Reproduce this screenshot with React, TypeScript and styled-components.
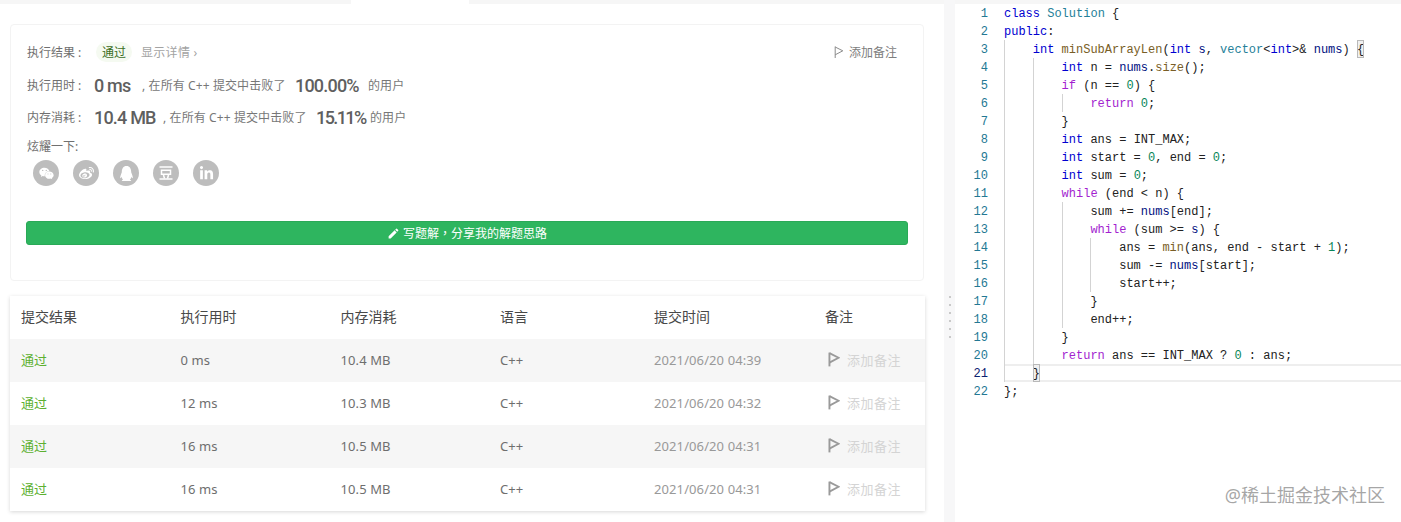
import React from "react";
import styled, { createGlobalStyle } from "styled-components";
import { FaLinkedinIn, FaQq, FaWeibo, FaWeixin } from "react-icons/fa";
import { MdEdit } from "react-icons/md";

const GlobalStyle = createGlobalStyle`
  html, body {
    margin: 0;
    padding: 0;
    background: #fff;
    font-family: "Roboto", "Noto Sans CJK SC", sans-serif;
  }
`;

const CJK = `"Noto Sans", "Noto Sans CJK SC", sans-serif`;

const Page = styled.div`
  width: 1401px;
  height: 522px;
  overflow: hidden;
  display: grid;
  grid-template-columns: 944px 11px 1fr;
  position: relative;
  background: #fff;
`;

const LeftPane = styled.div`
  display: flex;
  flex-direction: column;
`;

const TabStrip = styled.div`
  height: 4px;
  display: grid;
  grid-template-columns: 351px 118px 1fr;
`;

const TabSegment = styled.div<{ $active?: boolean }>`
  background: ${(p) => (p.$active ? "#fff" : "#f6f6f6")};
`;

const Content = styled.div`
  padding: 20px 20px 0 10px;
  display: flex;
  flex-direction: column;
  gap: 15px;
`;

const ResultCard = styled.section`
  box-sizing: border-box;
  width: 914px;
  height: 257px;
  padding: 0 15px;
  border: 1px solid #f3f3f3;
  border-radius: 4px;
  color: #666;
  font-family: ${CJK};
  font-size: 12px;
`;

const TopRow = styled.div`
  height: 20px;
  margin-top: 17px;
  display: flex;
  align-items: center;
  justify-content: space-between;
`;

const RowStart = styled.div`
  display: flex;
  align-items: center;
`;

const Label = styled.span`
  width: 67px;
  margin-left: 1px;
  flex: none;
  color: #707070;
  white-space: nowrap;
`;

const PassBadge = styled.span`
  margin-left: 2px;
  width: 36px;
  height: 20px;
  border-radius: 10px;
  background: #f5faf1;
  color: #3b6d1e;
  display: flex;
  align-items: center;
  justify-content: center;
`;

const DetailLink = styled.span`
  margin-left: 9px;
  color: #a3a3a3;
  letter-spacing: 0.3px;
`;

const NoteAction = styled.span`
  display: flex;
  align-items: center;
  gap: 5px;
  margin-right: 11px;
  color: #7d7d7d;
`;

const StatRow = styled.div<{ $top: number }>`
  height: 24px;
  margin-top: ${(p) => p.$top}px;
  display: flex;
  align-items: center;
`;

const StatValue = styled.span<{ $w: number; $tight?: boolean }>`
  width: ${(p) => p.$w}px;
  flex: none;
  font-family: "Roboto", sans-serif;
  font-size: 18px;
  font-weight: 500;
  letter-spacing: ${(p) => (p.$tight ? "-1.6px" : "-0.8px")};
  color: #5f5f5f;
  white-space: nowrap;
`;

const StatText = styled.span<{ $w: number }>`
  width: ${(p) => p.$w}px;
  flex: none;
  white-space: nowrap;
  letter-spacing: 0.1px;
  color: #777;
`;

const BragLabel = styled.div`
  margin: 10px 0 0 1px;
  height: 16px;
  line-height: 16px;
  color: #707070;
`;

const ShareRow = styled.div`
  margin: 5px 0 0 7px;
  display: flex;
  gap: 14px;
`;

const ShareButton = styled.span`
  width: 26px;
  height: 26px;
  border-radius: 50%;
  background: #bdbdbd;
  color: #fff;
  font-size: 15px;
  display: flex;
  align-items: center;
  justify-content: center;
`;

const WriteButton = styled.div`
  box-sizing: border-box;
  margin-top: 35px;
  width: 882px;
  height: 24px;
  border-radius: 3px;
  background: #2eb55f;
  border: 1px solid #2aa957;
  color: #fff;
  display: flex;
  align-items: center;
  justify-content: center;
  gap: 3px;
`;

const CenteredComma = styled.span`
  font-family: "Noto Sans CJK TC", sans-serif;
`;

const SubmissionTable = styled.table`
  width: 915px;
  border-collapse: collapse;
  table-layout: fixed;
  background: #fff;
  box-shadow: 0 1px 4px rgba(0, 0, 0, 0.16);
  font-family: ${CJK};
`;

const HeadCell = styled.th`
  box-sizing: border-box;
  height: 43px;
  padding: 0 0 4px 11px;
  text-align: left;
  font-size: 14px;
  font-weight: 400;
  color: #484848;
`;

const Row = styled.tr`
  &:nth-child(odd) {
    background: #f6f6f6;
  }
`;

const Cell = styled.td<{ $tone?: string }>`
  box-sizing: border-box;
  height: 43px;
  padding: 0 0 2px 11px;
  font-size: 13px;
  letter-spacing: 0.1px;
  color: ${(p) => p.$tone || "#6e6e6e"};
  white-space: nowrap;
`;

const RowNote = styled.span`
  display: flex;
  align-items: center;
  gap: 7px;
  margin-left: 3px;
  letter-spacing: 0.5px;
  color: #d4d4d4;
`;

const Splitter = styled.div`
  background: #f7f7f8;
  padding-top: 296px;
  display: flex;
  flex-direction: column;
  align-items: center;
  gap: 6px;
`;

const GripDot = styled.span`
  width: 2px;
  height: 2px;
  background: #c9c9c9;
`;

const EditorPane = styled.div`
  display: flex;
  flex-direction: column;
`;

const EditorTop = styled.div`
  height: 4px;
  background: #f6f6f6;
`;

const CodeLine = styled.div`
  box-sizing: border-box;
  height: 18px;
  display: flex;
  font-family: "Liberation Mono", monospace;
  font-size: 12px;
  line-height: 20px;
  white-space: pre;
`;

const LineNumber = styled.span<{ $current?: boolean }>`
  width: 49px;
  flex: none;
  padding-right: 16px;
  box-sizing: border-box;
  text-align: right;
  color: ${(p) => (p.$current ? "#0b216f" : "#237893")};
`;

const LineBody = styled.span<{ $current?: boolean }>`
  flex: 1;
  display: flex;
  box-sizing: border-box;
  color: #222;
  ${(p) => (p.$current ? "box-shadow: inset 0 2px 0 #eeeeee, inset 0 -2px 0 #eeeeee;" : "")}
`;

const IndentGuide = styled.span`
  box-sizing: border-box;
  width: 28.8px;
  flex: none;
  border-left: 1px solid #d3d3d3;
`;

const Token = styled.span<{ $color: string }>`
  color: ${(p) => p.$color};
`;

const MatchBracket = styled.span`
  box-sizing: border-box;
  height: 18px;
  background: #f0f0f0;
  outline: 1px solid #b9b9b9;
  outline-offset: -1px;
`;

const Watermark = styled.div`
  position: absolute;
  right: 16px;
  top: 484px;
  font-family: ${CJK};
  font-size: 18px;
  line-height: 22px;
  color: rgba(150, 150, 150, 0.85);
  white-space: nowrap;
`;

const Flag = ({ size, color, width }: { size: number; color: string; width: number }) => (
  <svg width={size} height={size * 1.2} viewBox="0 0 10 12" fill="none" stroke={color} strokeWidth={width}>
    <path d="M1.2 0.5V12" />
    <path d="M1.2 1L8.8 4.8L1.2 8.8" />
  </svg>
);

const DoubanIcon = () => (
  <svg width="16" height="16" viewBox="0 0 16 16" fill="none" stroke="#fff" strokeWidth="1.5">
    <path d="M1.5 2H14.5" />
    <path d="M3.5 5.2H12.5V9.2H3.5Z" />
    <path d="M5.5 10L6.5 13.5M10.5 10L9.5 13.5" />
    <path d="M1.5 14H14.5" />
  </svg>
);

const rows = [
  { time: "0 ms", memory: "10.4 MB", at: "2021/06/20 04:39" },
  { time: "12 ms", memory: "10.3 MB", at: "2021/06/20 04:32" },
  { time: "16 ms", memory: "10.5 MB", at: "2021/06/20 04:31" },
  { time: "16 ms", memory: "10.5 MB", at: "2021/06/20 04:31" },
];

const code = [
  "class Solution {",
  "public:",
  "    int minSubArrayLen(int s, vector<int>& nums) {",
  "        int n = nums.size();",
  "        if (n == 0) {",
  "            return 0;",
  "        }",
  "        int ans = INT_MAX;",
  "        int start = 0, end = 0;",
  "        int sum = 0;",
  "        while (end < n) {",
  "            sum += nums[end];",
  "            while (sum >= s) {",
  "                ans = min(ans, end - start + 1);",
  "                sum -= nums[start];",
  "                start++;",
  "            }",
  "            end++;",
  "        }",
  "        return ans == INT_MAX ? 0 : ans;",
  "    }",
  "};",
];

const tokenColors: Record<string, string> = {
  class: "#0000d0",
  public: "#0000d0",
  int: "#0000d0",
  if: "#a31fd0",
  while: "#a31fd0",
  return: "#a31fd0",
  Solution: "#267f99",
  vector: "#267f99",
  minSubArrayLen: "#795e26",
  size: "#795e26",
  min: "#795e26",
  nums: "#001080",
  s: "#001080",
};

function highlight(text: string) {
  return text.split(/(\b\w+\b)/).map((part, i) => {
    const color = /^\d+$/.test(part) ? "#098658" : tokenColors[part];
    return color ? <Token key={i} $color={color}>{part}</Token> : part;
  });
}

const CodeRow = ({ text, index }: { text: string; index: number }) => {
  const line = index + 1;
  const indent = text.length - text.trimStart().length;
  const levels = Math.floor(indent / 4);
  let body = text.trimStart();
  const hasMatch = line === 3 || line === 21;
  const bracket = hasMatch ? body.slice(-1) : "";
  if (hasMatch) body = body.slice(0, -1);
  return (
    <CodeLine>
      <LineNumber $current={line === 21}>{line}</LineNumber>
      <LineBody $current={line === 21}>
        {Array.from({ length: levels }).map((_, i) => (
          <IndentGuide key={i} />
        ))}
        <span>{highlight(body)}</span>
        {bracket && <MatchBracket>{bracket}</MatchBracket>}
      </LineBody>
    </CodeLine>
  );
};

export default function App() {
  return (
    <Page>
      <GlobalStyle />
      <LeftPane>
        <TabStrip>
          <TabSegment />
          <TabSegment $active />
          <TabSegment />
        </TabStrip>
        <Content>
          <ResultCard>
            <TopRow>
              <RowStart>
                <Label>执行结果 :</Label>
                <PassBadge>通过</PassBadge>
                <DetailLink>显示详情 ›</DetailLink>
              </RowStart>
              <NoteAction>
                <Flag size={10} color="#8c8c8c" width={1} />
                添加备注
              </NoteAction>
            </TopRow>
            <StatRow $top={11}>
              <Label>执行用时 :</Label>
              <StatValue $w={48}>0 ms</StatValue>
              <StatText $w={153}>, 在所有 C++ 提交中击败了</StatText>
              <StatValue $w={73}>100.00%</StatValue>
              <StatText $w={40}>的用户</StatText>
            </StatRow>
            <StatRow $top={8}>
              <Label>内存消耗 :</Label>
              <StatValue $w={69}>10.4 MB</StatValue>
              <StatText $w={153}>, 在所有 C++ 提交中击败了</StatText>
              <StatValue $w={54} $tight>15.11%</StatValue>
              <StatText $w={40}>的用户</StatText>
            </StatRow>
            <BragLabel>炫耀一下:</BragLabel>
            <ShareRow>
              <ShareButton><FaWeixin /></ShareButton>
              <ShareButton><FaWeibo /></ShareButton>
              <ShareButton><FaQq /></ShareButton>
              <ShareButton><DoubanIcon /></ShareButton>
              <ShareButton><FaLinkedinIn /></ShareButton>
            </ShareRow>
            <WriteButton>
              <MdEdit size={13} />
              <span>写题解<CenteredComma>，</CenteredComma>分享我的解题思路</span>
            </WriteButton>
          </ResultCard>
          <SubmissionTable>
            <colgroup>
              <col width={159.5} />
              <col width={160} />
              <col width={159.5} />
              <col width={154} />
              <col width={171} />
              <col />
            </colgroup>
            <thead>
              <tr>
                <HeadCell>提交结果</HeadCell>
                <HeadCell>执行用时</HeadCell>
                <HeadCell>内存消耗</HeadCell>
                <HeadCell>语言</HeadCell>
                <HeadCell>提交时间</HeadCell>
                <HeadCell>备注</HeadCell>
              </tr>
            </thead>
            <tbody>
              {rows.map((row, i) => (
                <Row key={i}>
                  <Cell $tone="#5cb030">通过</Cell>
                  <Cell>{row.time}</Cell>
                  <Cell>{row.memory}</Cell>
                  <Cell>C++</Cell>
                  <Cell $tone="#999">{row.at}</Cell>
                  <Cell>
                    <RowNote>
                      <Flag size={12} color="#9a9a9a" width={1.6} />
                      添加备注
                    </RowNote>
                  </Cell>
                </Row>
              ))}
            </tbody>
          </SubmissionTable>
        </Content>
      </LeftPane>
      <Splitter>
        {Array.from({ length: 6 }).map((_, i) => (
          <GripDot key={i} />
        ))}
      </Splitter>
      <EditorPane>
        <EditorTop />
        {code.map((text, i) => (
          <CodeRow key={i} text={text} index={i} />
        ))}
      </EditorPane>
      <Watermark>@稀土掘金技术社区</Watermark>
    </Page>
  );
}
